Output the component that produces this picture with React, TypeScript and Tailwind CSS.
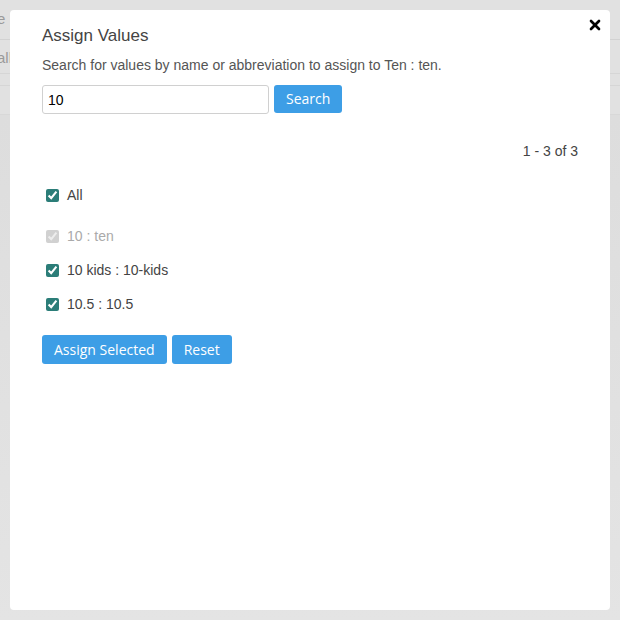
import { X } from 'lucide-react'

const ITEMS = [
  { label: '10 : ten', disabled: true },
  { label: '10 kids : 10-kids', disabled: false },
  { label: '10.5 : 10.5', disabled: false },
]

function Check({ label, disabled }: { label: string; disabled?: boolean }) {
  return (
    <label className={disabled ? 'flex items-center gap-[8px] text-[#aaaaaa]' : 'flex items-center gap-[8px] text-[#444444]'}>
      <input
        type="checkbox"
        defaultChecked
        disabled={disabled}
        className="m-0 ml-[4px] h-[13px] w-[13px] accent-[#2b7d78]"
      />
      <span>{label}</span>
    </label>
  )
}

export default function App() {
  return (
    <div className="relative h-[620px] w-[620px] overflow-hidden bg-[#e1e1e1] font-['Liberation_Sans',Arial,sans-serif] text-[14px]">
      {/* dimmed page behind the dialog */}
      <div className="absolute inset-0 flex flex-col text-[#9a9a9a]">
        <div className="flex h-[40px] items-center border-b border-[#d2d2d2] text-[15px]">
          <span className="-ml-[3px] -mt-[1px]">e</span>
        </div>
        <div className="flex h-[34px] items-center border-b border-[#d6d6d6] text-[15px]">
          <span className="-ml-[3px] mt-[4px]">all</span>
        </div>
        <div className="h-[12px] border-b border-[#d6d6d6]" />
        <div className="h-[29px] border-b border-[#d8d8d8]" />
        <div className="flex-1 bg-gradient-to-b from-[#dddddd] to-[#e4e4e4]" />
      </div>

      <div className="absolute left-[10px] top-[10px] flex h-[600px] w-[600px] flex-col rounded-[4px] bg-white px-[32px] pt-[16px]">
        <button className="absolute right-[7px] top-[7px] text-black">
          <X size={16} strokeWidth={4} />
        </button>

        <h2 className="text-[17px] leading-[20px] text-[#444444]">Assign Values</h2>
        <p className="mt-[10px] leading-[18px] text-[#555555]">
          Search for values by name or abbreviation to assign to Ten : ten.
        </p>

        <div className="mt-[11px] flex items-center gap-[5px]">
          <input
            defaultValue="10"
            className="h-[29px] w-[227px] rounded-[3px] border border-[#d0d0d0] px-[5px] text-[14px] text-black outline-none"
          />
          <button className="-mt-[2px] h-[28px] rounded-[3px] bg-[#3d9ee6] px-[12px] font-['Open_Sans',sans-serif] text-[14px] text-white">
            Search
          </button>
        </div>

        <div className="mt-[28px] text-right leading-[18px] text-[#444444]">1 - 3 of 3</div>

        <div className="mt-[25px]">
          <Check label="All" />
        </div>

        <div className="mt-[20px] flex flex-col gap-[13px]">
          {ITEMS.map((it) => (
            <Check key={it.label} label={it.label} disabled={it.disabled} />
          ))}
        </div>

        <div className="mt-[20px] flex gap-[5px]">
          <button className="h-[29px] rounded-[3px] bg-[#3d9ee6] px-[12px] font-['Open_Sans',sans-serif] text-[14px] text-white">
            Assign Selected
          </button>
          <button className="h-[29px] rounded-[3px] bg-[#3d9ee6] px-[12px] font-['Open_Sans',sans-serif] text-[14px] text-white">
            Reset
          </button>
        </div>
      </div>
    </div>
  )
}
